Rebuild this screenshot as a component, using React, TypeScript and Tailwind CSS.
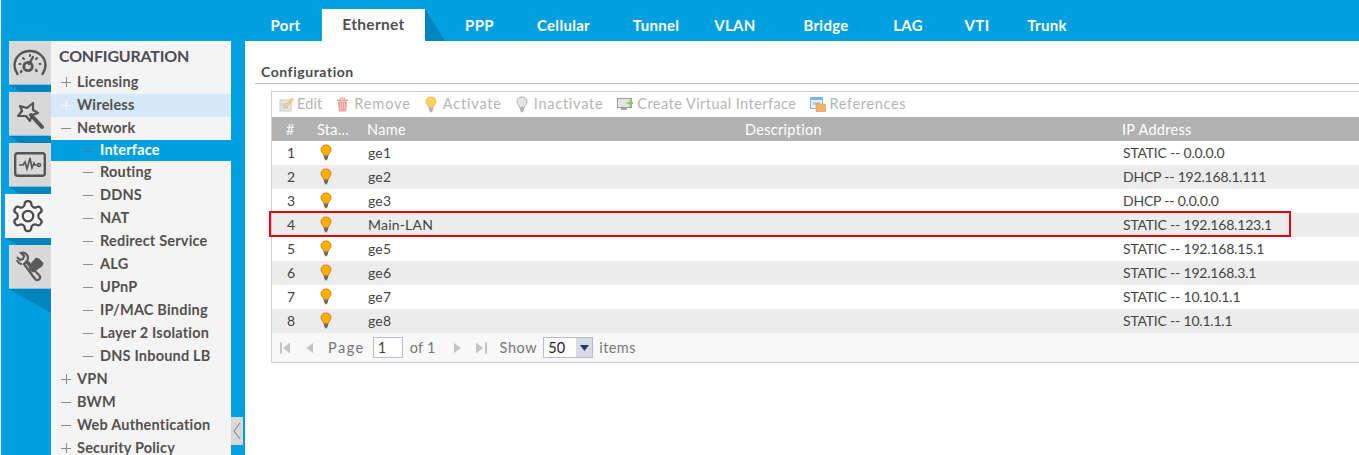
import type { ReactNode } from "react"

const tabs = ["Port", "Ethernet", "PPP", "Cellular", "Tunnel", "VLAN", "Bridge", "LAG", "VTI", "Trunk"]

const tabClass: Record<string, string> = {
  Port: "w-[73px]",
  PPP: "w-[71px] ml-[-1px]",
  Cellular: "w-[97px]",
  Tunnel: "w-[88px]",
  VLAN: "w-[70px]",
  Bridge: "w-[112px]",
  LAG: "w-[52px]",
  VTI: "w-[86px]",
  Trunk: "w-[54px]",
}

const menu: { label: string; sign: "+" | "-"; sub?: boolean; active?: boolean; hover?: boolean }[] = [
  { label: "Licensing", sign: "+" },
  { label: "Wireless", sign: "+", hover: true },
  { label: "Network", sign: "-" },
  { label: "Interface", sign: "-", sub: true, active: true },
  { label: "Routing", sign: "-", sub: true },
  { label: "DDNS", sign: "-", sub: true },
  { label: "NAT", sign: "-", sub: true },
  { label: "Redirect Service", sign: "-", sub: true },
  { label: "ALG", sign: "-", sub: true },
  { label: "UPnP", sign: "-", sub: true },
  { label: "IP/MAC Binding", sign: "-", sub: true },
  { label: "Layer 2 Isolation", sign: "-", sub: true },
  { label: "DNS Inbound LB", sign: "-", sub: true },
  { label: "VPN", sign: "+" },
  { label: "BWM", sign: "-" },
  { label: "Web Authentication", sign: "-" },
  { label: "Security Policy", sign: "+" },
]

const rows = [
  { id: 1, name: "ge1", ip: "STATIC -- 0.0.0.0" },
  { id: 2, name: "ge2", ip: "DHCP -- 192.168.1.111" },
  { id: 3, name: "ge3", ip: "DHCP -- 0.0.0.0" },
  { id: 4, name: "Main-LAN", ip: "STATIC -- 192.168.123.1" },
  { id: 5, name: "ge5", ip: "STATIC -- 192.168.15.1" },
  { id: 6, name: "ge6", ip: "STATIC -- 192.168.3.1" },
  { id: 7, name: "ge7", ip: "STATIC -- 10.10.1.1" },
  { id: 8, name: "ge8", ip: "STATIC -- 10.1.1.1" },
]

function Bulb({ fill = "#fbb000", stroke = "#d98200", base = "#6f6f6f" }: { fill?: string; stroke?: string; base?: string }) {
  return (
    <svg width="12" height="17" viewBox="0 0 12 17">
      <path d="M6 1C3 1 1 3 1 5.600c0 2.600 2.300 3.400 2.700 5.900h4.600C8.700 9 11 8.200 11 5.600 11 3 9 1 6 1z" fill={fill} stroke={stroke} strokeWidth="1" />
      <path d="M3.800 12.500h4.400M4 14h4M4.800 15.500h2.400" stroke={base} strokeWidth="1.300" />
    </svg>
  )
}

function GaugeIcon() {
  return (
    <svg width="34" height="28" viewBox="0 0 34 28" fill="none" stroke="#555" strokeWidth="2.400" strokeLinecap="round">
      <path d="M4.500 25C2.500 22 1.500 19 1.500 16.500 1.500 8 8.500 2 17 2s15.500 6 15.500 14.500c0 2.500-1 5.500-3 8.500" />
      <path d="M6.500 15h1M10 9l1 1M17 6v1M24 9l-1 1M27.500 15h-1" strokeWidth="2" />
      <circle cx="15" cy="17.500" r="4.200" strokeWidth="2.800" />
      <path d="M16 15l4-7M8 23l.5-1M23 21l.5 1" strokeWidth="2.400" />
    </svg>
  )
}

function WandIcon() {
  return (
    <svg width="28" height="32" viewBox="0 0 28 32" fill="none" stroke="#555" strokeWidth="2.200" strokeLinejoin="round">
      <path d="M4 8l7 2 6-5 0 7 5 3-6 2-2 6-4-5-8 0 4-5z" />
      <path d="M15 17l11 12" strokeWidth="4" strokeLinecap="round" />
    </svg>
  )
}

function MonitorIcon() {
  return (
    <svg width="32" height="25" viewBox="0 0 32 25" fill="none" stroke="#555">
      <rect x="1.200" y="1.200" width="29.600" height="22.600" rx="2.500" strokeWidth="2.400" />
      <path d="M5 13h4l2-3 2 7 3-11 2 10 2-5 1 2h2" strokeWidth="1.600" />
      <circle cx="25" cy="13" r="1.500" strokeWidth="1.600" />
    </svg>
  )
}

function GearIcon() {
  return (
    <svg width="36" height="36" viewBox="0 0 24 24" fill="none" stroke="#4a4a4a" strokeWidth="1.500" strokeLinejoin="round">
      <path d="M12.220 2h-.44a2 2 0 0 0-2 2v.18a2 2 0 0 1-1 1.730l-.43.25a2 2 0 0 1-2 0l-.15-.08a2 2 0 0 0-2.730.73l-.22.380a2 2 0 0 0 .73 2.730l.15.100a2 2 0 0 1 1 1.720v.510a2 2 0 0 1-1 1.740l-.15.090a2 2 0 0 0-.73 2.730l.22.380a2 2 0 0 0 2.730.730l.15-.080a2 2 0 0 1 2 0l.43.250a2 2 0 0 1 1 1.730V20a2 2 0 0 0 2 2h.44a2 2 0 0 0 2-2v-.18a2 2 0 0 1 1-1.730l.43-.250a2 2 0 0 1 2 0l.15.080a2 2 0 0 0 2.730-.730l.22-.390a2 2 0 0 0-.73-2.730l-.15-.080a2 2 0 0 1-1-1.740v-.500a2 2 0 0 1 1-1.740l.15-.090a2 2 0 0 0 .73-2.730l-.22-.380a2 2 0 0 0-2.730-.730l-.15.080a2 2 0 0 1-2 0l-.43-.250a2 2 0 0 1-1-1.730V4a2 2 0 0 0-2-2z" />
      <circle cx="12" cy="12" r="3.500" />
    </svg>
  )
}

function ToolsIcon() {
  return (
    <svg width="30" height="32" viewBox="0 0 30 32" fill="none" stroke="#5a5a5a">
      <path d="M2 6l3 3 3-1 1-3-3-3c3-1 7 1 7 5 0 1 0 2-1 3l3 3" strokeWidth="2.200" />
      <path d="M7 13c-2 0-4-1-5-4" strokeWidth="2.200" />
      <path d="M9 13l2-2 13 13c3 3-1 7-4 4z" strokeWidth="2.200" />
      <path d="M15 19l-1-4 7-8 3 1 4 4-1 3-9 6z" fill="#5a5a5a" strokeWidth="1" />
      <path d="M17 24l3 3" strokeWidth="1.500" />
    </svg>
  )
}

function EditIcon() {
  return (
    <svg width="15" height="15" viewBox="0 0 15 15">
      <rect x="1" y="3" width="11" height="11" fill="#e6e6e6" stroke="#c8c8c8" />
      <path d="M3 7h6M3 9h6M3 11h6" stroke="#bdbdbd" />
      <path d="M6 9l7-8 1.500 1.500-7 8-2 .5z" fill="#f5d28a" stroke="#e0b050" strokeWidth=".5" />
    </svg>
  )
}

function TrashIcon() {
  return (
    <svg width="13" height="15" viewBox="0 0 13 15">
      <path d="M1 2.500h11V4H1z" fill="#ee9a9a" />
      <path d="M4.500 2.500V1h4v1.500" fill="none" stroke="#ee9a9a" />
      <path d="M2 4.500h9l-.8 10H2.800z" fill="#f29c9c" />
      <path d="M4.500 6v7M6.500 6v7M8.500 6v7" stroke="#f8c4c4" />
    </svg>
  )
}

function VirtualIcon() {
  return (
    <svg width="16" height="15" viewBox="0 0 16 15">
      <rect x=".5" y="1.500" width="14" height="9" fill="#e4e4e4" stroke="#9a9a9a" />
      <rect x="4" y="11" width="6" height="2" fill="#aaa" />
      <path d="M9.500 5h3V2.500h2V5H16v2h-1.500v3h-2V7h-3z" fill="#8fcf6a" />
    </svg>
  )
}

function RefIcon() {
  return (
    <svg width="16" height="15" viewBox="0 0 16 15">
      <rect x=".5" y=".5" width="12" height="11" fill="#eaf3fd" stroke="#7fb4ee" />
      <rect x=".5" y=".5" width="12" height="2.500" fill="#7fb4ee" />
      <path d="M3 5h3v3H3zM7 5h3v3H7z" fill="#a9cdf3" />
      <path d="M6 6h3l1 1h5.500v8H6z" fill="#f0b26e" stroke="#d89a58" strokeWidth=".5" />
    </svg>
  )
}

function Tile({ children, active, last }: { children: ReactNode; active?: boolean; last?: boolean }) {
  return (
    <div className={active ? "w-[46px]" : "w-[42px] ml-[4px]"}>
      <div className={`flex h-[44px] items-center justify-center ${active ? "bg-[#f4f4f4]" : "bg-[#d8d8d8] border-b border-[#7fc4e8]"}`}>
        {children}
      </div>
      {last ? (
        <div className="h-[24px] bg-[#0084bd] [clip-path:polygon(0_0,100%_0,100%_100%)]" />
      ) : (
        <div className="h-[7px] bg-[#0084bd] [clip-path:polygon(0_0,100%_0,100%_100%,28%_100%)]" />
      )}
    </div>
  )
}

function ToolItem({ icon, label, slot, tracking }: { icon: ReactNode; label: string; slot: string; tracking: string }) {
  return (
    <div className={`flex items-center text-[14.500px] text-[#b4b4b4] ${tracking}`}>
      <span className={`flex ${slot}`}>{icon}</span>
      <span>{label}</span>
    </div>
  )
}

function PagerArrow({ d }: { d: string }) {
  return (
    <svg width="14" height="14" viewBox="0 0 14 14" className="shrink-0">
      <path d={d} fill="#c4c4c4" />
    </svg>
  )
}

function Sign({ sign, color }: { sign: "+" | "-"; color: string }) {
  return (
    <svg width="10" height="10" viewBox="0 0 10 10" stroke={color}>
      <path d="M0 5.500h10" />
      {sign === "+" && <path d="M5.500 0v10" />}
    </svg>
  )
}

export default function App() {
  return (
    <div className="flex h-[455px] w-[1359px] flex-col overflow-hidden bg-white pl-px font-['Lato',sans-serif]">
      <header className="flex h-[41px] shrink-0 items-end bg-[#009fdf] pl-[248px]">
        {tabs.map((tab) =>
          tab === "Ethernet" ? (
            <div key={tab} className="flex">
              <div className="flex h-[32px] w-[103px] items-start justify-center bg-white pt-[4px] text-[15.500px] font-bold tracking-[0.3px] text-[#4f4f4f]">
                {tab}
              </div>
              <div className="h-[32px] w-[20px] bg-[#0084bd] [clip-path:polygon(0_0,100%_100%,0_100%)]" />
            </div>
          ) : (
            <div
              key={tab}
              className={`flex h-[32px] items-start justify-center pt-[5px] text-[15px] font-bold tracking-[0.3px] text-white ${tabClass[tab]}`}
            >
              {tab}
            </div>
          ),
        )}
      </header>

      <div className="flex min-h-0 flex-1 bg-[#009fdf]">
        <nav className="w-[50px] shrink-0 pl-[4px]">
          <Tile><GaugeIcon /></Tile>
          <Tile><WandIcon /></Tile>
          <Tile><MonitorIcon /></Tile>
          <Tile active><GearIcon /></Tile>
          <Tile last><ToolsIcon /></Tile>
        </nav>

        <aside className="w-[180px] shrink-0 overflow-hidden bg-[#f4f4f4]">
          <div className="flex h-[30px] items-center pl-[8px] text-[16px] font-bold tracking-[-0.2px] text-[#4c4c56]">CONFIGURATION</div>
          {menu.map((item) => (
            <div
              key={item.label}
              className={`flex items-center whitespace-nowrap pb-px text-[14.500px] font-bold tracking-[0.2px] ${item.active ? "h-[21px] bg-[#009fdf] text-white" : "h-[23px] text-[#55504f]"} ${item.hover ? "bg-[#d6e9f8]" : ""} ${item.sub ? "pl-[32px]" : "pl-[10px]"}`}
            >
              <span className={`flex shrink-0 ${item.sub ? "w-[17px]" : "w-[16px]"}`}>
                <Sign sign={item.sign} color={item.active ? "#4a7f99" : item.hover ? "#f4f4f4" : "#8c8c8c"} />
              </span>
              <span>{item.label}</span>
            </div>
          ))}
        </aside>

        <div className="w-[14px] shrink-0 pt-[376px]">
          <div className="flex h-[28px] w-[12px] items-center justify-center bg-[#d8d8d8]">
            <svg width="8" height="18" viewBox="0 0 8 18" fill="none" stroke="#777">
              <path d="M7 1L1 9l6 8" />
            </svg>
          </div>
        </div>

        <main className="min-w-0 flex-1 bg-white pl-[10px] pt-[23px] text-[14px] text-[#444]">
          <div className="h-[20px] border-b border-[#bcbcbc] pl-[6px] text-[14px] font-bold leading-[16px] tracking-[0.55px] text-[#4a4a4a]">
            Configuration
          </div>
          <section className="ml-[16px] mt-[7px] w-[1100px] border border-r-0 border-[#cfcfcf]">
            <div className="flex h-[25px] items-center gap-[14px] pb-px pl-[7px]">
              <ToolItem icon={<EditIcon />} slot="w-[18px]" tracking="tracking-[0.1px]" label="Edit" />
              <ToolItem icon={<TrashIcon />} slot="w-[18px]" tracking="tracking-[0.9px]" label="Remove" />
              <ToolItem icon={<Bulb fill="#fcd262" stroke="#f0bc50" base="#b4b4b4" />} slot="w-[18px]" tracking="tracking-[0.8px]" label="Activate" />
              <ToolItem icon={<Bulb fill="#e4e4e4" stroke="#b0b0b0" base="#b4b4b4" />} slot="w-[18px]" tracking="tracking-[0.75px]" label="Inactivate" />
              <ToolItem icon={<VirtualIcon />} slot="w-[20px]" tracking="tracking-[0.45px]" label="Create Virtual Interface" />
              <ToolItem icon={<RefIcon />} slot="w-[19px]" tracking="tracking-[0.65px]" label="References" />
            </div>
            <div className="flex h-[24px] items-center bg-[#b2b2b2] pt-[2px] text-[14.500px] tracking-[0.3px] text-white">
              <span className="w-[45px] pl-[14px]">#</span>
              <span className="w-[50px]">Sta...</span>
              <span className="w-[378px]">Name</span>
              <span className="w-[377px]">Description</span>
              <span>IP Address</span>
            </div>
            {rows.map((row) => (
              <div key={row.id} className={`relative flex h-[24px] items-center pb-px ${row.id % 2 === 0 ? "bg-[#ececec]" : "bg-white"}`}>
                <span className="w-[48px] pl-[15px]">{row.id}</span>
                <span className="w-[48px]"><Bulb /></span>
                <span className="w-[755px] tracking-[0.2px]">{row.name}</span>
                <span className="tracking-[-0.2px]">{row.ip}</span>
                {row.id === 4 && <div className="absolute left-[-3px] top-[-2px] h-[26px] w-[1022px] border-2 border-[#e8000f]" />}
              </div>
            ))}
            <div className="flex h-[29px] items-center bg-[#f8f8f8] pl-[7px] text-[14.500px] text-[#777]">
              <PagerArrow d="M1 1.500h2v11H1zM11 1.500v11L4 7z" />
              <span className="w-[10px]" />
              <PagerArrow d="M10 2v10L3 7z" />
              <span className="ml-[11px] tracking-[1.5px]">Page</span>
              <span className="ml-[8px] flex h-[21px] w-[30px] items-center border border-[#b8bcd0] bg-white pl-[4px] text-[#444]">1</span>
              <span className="ml-[7px] tracking-[0.2px]">of 1</span>
              <span className="w-[14px]" />
              <PagerArrow d="M4 2v10l7-5z" />
              <span className="w-[10px]" />
              <PagerArrow d="M2 1.500v11l7-5.500zM11 1.500h2v11h-2z" />
              <span className="ml-[12px] tracking-[0.6px]">Show</span>
              <span className="ml-[6px] flex h-[21px] w-[50px] items-center border border-[#b8bcd0] bg-white pl-[4px] text-[#222]">
                <span className="flex-1">50</span>
                <span className="flex h-full w-[16px] items-center justify-center bg-[#d6dbe6]">
                  <svg width="9" height="6" viewBox="0 0 9 6"><path d="M0 0h9L4.500 6z" fill="#1d3a6e" /></svg>
                </span>
              </span>
              <span className="ml-[6px] tracking-[0.4px]">items</span>
            </div>
          </section>
        </main>
      </div>
    </div>
  )
}
